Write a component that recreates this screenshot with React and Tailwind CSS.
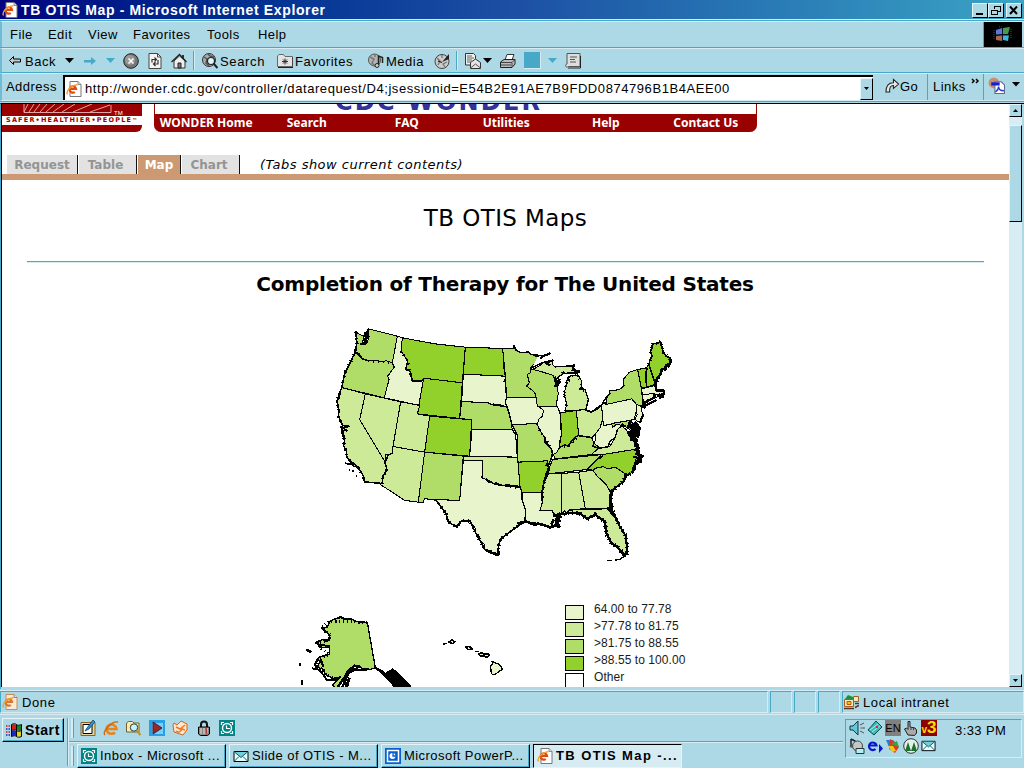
import React from "react";

const UI = "font-['Liberation_Sans',Arial,sans-serif]";
const VERDANA = "font-['DejaVu_Sans',Verdana,sans-serif]";

function Icon({ children, size = 16, className = "" }) {
  return (
    <svg viewBox="0 0 16 16" width={size} height={size} className={"shrink-0 " + className} shapeRendering="geometricPrecision">
      {children}
    </svg>
  );
}

function IePage({ dim }) {
  return (
    <Icon>
      <path d="M4 .5h8l3 3v12H4z" fill={dim ? "#fbe9d8" : "#fff"} stroke={dim ? "#c98a5a" : "#777"} />
      <path d="M12 .5v3h3" fill="#ddd" stroke="#777" strokeWidth=".8" />
      <path d="M3.500 8h6.500a3.200 3.200 0 1 0-1.200 3" fill="none" stroke={dim ? "#d87828" : "#e04810"} strokeWidth="2.200" />
      <path d="M1.500 13.500C-.5 10 5 4.500 11.500 3.500" fill="none" stroke="#f0a030" strokeWidth="1.400" />
    </Icon>
  );
}

function Caret({ color = "#000" }) {
  return (
    <svg viewBox="0 0 9 5" width="9" height="5" className="shrink-0">
      <path d="M0 0h9L4.500 5z" fill={color} />
    </svg>
  );
}

function OutlookClock() {
  return (
    <Icon>
      <path d="M0 0h16v16H0z" fill="#008484" />
      <circle cx="8" cy="8" r="4.500" fill="#008484" stroke="#fff" strokeWidth="1.400" />
      <path d="M7.500 5.500v3H11M2.500 5V2.500H5M11 2.500h2.500V5M2.500 11v2.500H5M11 13.500h2.500V11" fill="none" stroke="#fff" strokeWidth="1.200" />
    </Icon>
  );
}

function Envelope({ size = 16 }) {
  return (
    <Icon size={size}>
      <path d="M1 3.500h14v10H1z" fill="#e4ffff" stroke="#000" />
      <path d="M1.500 4l6.500 5.500L14.500 4M1.500 13L6 8.500M14.500 13L10 8.500" fill="#70d0d8" stroke="#185868" />
    </Icon>
  );
}

function Divider() {
  return <div className="h-[19px] w-[2px] shrink-0 border-l border-[#48a8c8] bg-[#d6ebf2]" />;
}

function TitleBar() {
  const btn = "flex h-[15px] w-[16px] items-center justify-center border border-t-[#e6f4f8] border-l-[#e6f4f8] border-r-black border-b-black bg-[#add8e6]";
  return (
    <header className="flex h-[19px] shrink-0 items-center bg-linear-to-r from-[#000080] via-[#1d4fa4] to-[#3ca4c4] pl-[2px] pr-[2px]">
      <IePage />
      <h1 className="ml-[3px] mt-[2px] whitespace-nowrap text-[14px] font-bold leading-[17px] tracking-[0.64px] text-white">
        TB OTIS Map - Microsoft Internet Explorer
      </h1>
      <div className="ml-auto mt-px flex">
        <div className={btn}>
          <svg width="12" height="11"><path d="M2 9h7" stroke="#000" strokeWidth="2" /></svg>
        </div>
        <div className={btn}>
          <svg width="12" height="11" shapeRendering="crispEdges"><path d="M4.500 4V1.500h6v5H8M4 1.500h7M1.500 5.500h6v4h-6zM1 5h7" fill="none" stroke="#000" /></svg>
        </div>
        <div className={btn + " ml-[2px]"}>
          <svg width="12" height="11"><path d="M2 1.500l7 7.500M9 1.500L2 9" stroke="#000" strokeWidth="2" /></svg>
        </div>
      </div>
    </header>
  );
}

function MenuBar() {
  return (
    <nav className="flex h-[26px] shrink-0 items-stretch border-t border-[#d6ebf2] border-l-2 border-l-[#70bcd4]">
      <div className="flex items-center text-[13px] leading-[15px] tracking-[0.45px]">
        <span className="ml-[8px] w-[38px]">File</span>
        <span className="w-[40px]">Edit</span>
        <span className="w-[45px]">View</span>
        <span className="w-[74px]">Favorites</span>
        <span className="w-[51px]">Tools</span>
        <span className="w-[40px]">Help</span>
      </div>
      <div className="ml-auto mr-[2px] flex w-[39px] items-center justify-center border-l border-[#48a8c8] bg-black">
        <svg width="20" height="17" viewBox="0 0 20 17">
          <path d="M3 4l6-2v6l-6 1z" fill="#5878d8" />
          <path d="M10 2l7-1-2 7h-5z" fill="#489850" />
          <path d="M3 10l6-1v6l-6-1z" fill="#a86848" />
          <path d="M10 9h6l-1 6-5-1z" fill="#38b8d8" />
          <path d="M1 4v10M6 1L9 0M18 3v9" stroke="#446" strokeDasharray="1 1" />
          <path d="M3 9h13M9.500 2v13" stroke="#101030" />
        </svg>
      </div>
    </nav>
  );
}

function ToolBar() {
  return (
    <div className="flex h-[25px] shrink-0 items-center border-t border-b border-t-[#d6ebf2] border-b-[#48a8c8] border-l-2 border-l-[#70bcd4] text-[13px] leading-[15px] tracking-[0.5px]">
      <svg width="14" height="12" viewBox="0 0 13 12" className="ml-[6px] shrink-0">
        <path d="M1 5.500L5 1.500v2.500h7v3H5v2.500z" fill="#c8c8c8" stroke="#000" strokeWidth="1" />
      </svg>
      <span className="ml-[2px] mt-px w-[39px] pl-px">Back</span>
      <div className="ml-[2px]"><Caret /></div>
      <svg width="13" height="12" viewBox="0 0 13 12" className="ml-[10px] shrink-0">
        <path d="M0 5h7V2l5 4-5 4V7.500H0z" fill="#48a8c8" />
      </svg>
      <div className="ml-[9px]"><Caret color="#48a8c8" /></div>
      <Icon className="ml-[8px]">
        <circle cx="8" cy="8" r="7.300" fill="#777" stroke="#222" />
        <circle cx="7" cy="7" r="5" fill="#999" />
        <path d="M5.500 5.500l5 5M10.500 5.500l-5 5" stroke="#fff" strokeWidth="1.500" />
      </Icon>
      <Icon className="ml-[8px]">
        <path d="M2 .5h8.500L14 4v11.500H2z" fill="#f4f4f4" stroke="#444" />
        <path d="M10.500.5V4H14" fill="none" stroke="#444" />
        <path d="M5 9.500V6.500h4M7.500 4.500l2 2-2 2M11 7v4H7M8.500 9L6.500 11l2 2" fill="none" stroke="#333" strokeWidth="1.200" />
      </Icon>
      <Icon className="ml-[8px]">
        <path d="M12 2v4" stroke="#333" strokeWidth="2" />
        <path d="M3 8v7h11V8L8.500 3z" fill="#eee" stroke="#333" />
        <path d="M.5 9L8.500 1.500 15.500 9" fill="none" stroke="#222" strokeWidth="1.300" />
        <path d="M7 15v-5h3v5z" fill="#777" stroke="#222" />
      </Icon>
      <div className="ml-[6px]"><Divider /></div>
      <Icon className="ml-[7px]">
        <circle cx="7" cy="7" r="6.500" fill="#aaa" stroke="#333" />
        <path d="M2 4l3 2-1 4 3 3M6 1l2 2 4 1" stroke="#555" fill="none" strokeWidth="1.500" />
        <circle cx="9" cy="8" r="3.500" fill="#ddf4f8" stroke="#222" strokeWidth="1.200" />
        <path d="M11.500 10.500l4 4.500" stroke="#222" strokeWidth="2.200" />
      </Icon>
      <span className="ml-[2px] mt-px w-[57px] tracking-[0.65px]">Search</span>
      <Icon>
        <path d="M.5 13.500V3L2 1.500h4.500L8 3.500h7.500v10z" fill="#e4e4e4" stroke="#666" />
        <path d="M1 14.500h15V4" fill="none" stroke="#222" />
        <path d="M8 5.500v6M5 8.500h6M6 6.500l4 4M10 6.500l-4 4" stroke="#333" />
      </Icon>
      <span className="ml-[2px] mt-px w-[73px]">Favorites</span>
      <Icon>
        <circle cx="6.500" cy="7" r="6" fill="#b4b4b4" stroke="#555" />
        <path d="M2 4l4 2-2 4 3 3M7 1v3" stroke="#777" fill="none" strokeWidth="1.500" />
        <path d="M10.500 12V3l4 1.500V10" fill="none" stroke="#222" strokeWidth="1.500" />
        <circle cx="9" cy="12.500" r="2" fill="#ccc" stroke="#222" />
      </Icon>
      <span className="ml-[2px] mt-px w-[48px]">Media</span>
      <Icon>
        <circle cx="8" cy="8.500" r="7" fill="#ccc" stroke="#444" />
        <path d="M3 5l3 3-2 4M8 2v3M13 9l-4 2 2 3" stroke="#777" fill="none" strokeWidth="1.300" />
        <path d="M8 9l7-8v5z" fill="#222" />
        <path d="M4 8l4 1.500" stroke="#222" strokeWidth="1.300" />
      </Icon>
      <div className="ml-[6px]"><Divider /></div>
      <Icon className="ml-[7px]">
        <path d="M.5.500h8l2 2V12H.5z" fill="#eee" stroke="#333" />
        <path d="M2 3h5M2 5h7M2 7h5M2 9h4" stroke="#666" />
        <path d="M5.500 9.500L10.500 6l5 3.500v6h-10z" fill="#e4e4e4" stroke="#333" />
        <path d="M5.500 15l5-4 5 4" fill="none" stroke="#555" />
      </Icon>
      <div className="ml-[2px]"><Caret /></div>
      <Icon className="ml-[8px]">
        <path d="M5 7L7 1.500h7L12 7z" fill="#fff" stroke="#333" />
        <path d="M.5 9L4 6.500h11V11l-3 3.500H.5z" fill="#bbb" stroke="#222" />
        <path d="M1 9.500h11l3-3M12 10v4M1 12h10" fill="none" stroke="#444" />
      </Icon>
      <div className="ml-[8px] h-[17px] w-[17px] shrink-0 border-b border-r border-[#d6ebf2] bg-[#48a8c8]" />
      <div className="ml-[7px]"><Caret color="#48a8c8" /></div>
      <Icon className="ml-[8px]">
        <path d="M2 .5h13v13H3.500c-3 2-4-2-1.500-2.500z" fill="#ddd" stroke="#555" />
        <path d="M3 15h12.500V3" fill="none" stroke="#222" />
        <path d="M5 4h7M5 6.500h5M5 9h6" stroke="#555" />
      </Icon>
    </div>
  );
}

function AddressBar() {
  return (
    <div className="flex h-[28px] shrink-0 items-stretch border-t border-b border-t-[#d6ebf2] border-b-[#d6ebf2] border-l-2 border-l-[#70bcd4] text-[13px] leading-[26px]">
      <span className="w-[61px] pl-[4px] tracking-[0.45px]">Address</span>
      <div className="mt-px flex h-[25px] w-[810px] items-center border-t-2 border-l-2 border-t-black border-l-black bg-white">
        <div className="pl-px"><IePage /></div>
        <span className="ml-[3px] whitespace-nowrap leading-[22px] tracking-[0.57px]">
          http://wonder.cdc.gov/controller/datarequest/D4;jsessionid=E54B2E91AE7B9FDD0874796B1B4AEE00
        </span>
        <div className="ml-auto flex h-[22px] w-[13px] items-center justify-center border border-t-[#e6f4f8] border-l-[#e6f4f8] border-r-black border-b-black bg-[#add8e6]">
          <svg width="5" height="3"><path d="M0 0h5L2.500 3z" /></svg>
        </div>
      </div>
      <Icon className="ml-[12px] mt-[4px]" size={15}>
        <path d="M1 15C1 8 4 5 9 5V1.500l5.500 5L9 11V8C6 8 4.500 10 5 15z" fill="#e8e8e8" stroke="#222" strokeWidth="1.100" />
      </Icon>
      <span className="w-[27px] tracking-[0.3px]">Go</span>
      <div className="border-l border-[#48a8c8]" />
      <span className="ml-[5px] w-[38px] tracking-[0.45px]">Links</span>
      <svg width="9" height="7" className="mt-[4px] shrink-0"><path d="M1 1l2 2-2 2M5 1l2 2-2 2" fill="none" stroke="#000" strokeWidth="1.500" /></svg>
      <div className="ml-[3px] border-l border-[#48a8c8]" />
      <Icon className="ml-[4px] mt-[3px]" size={17}>
        <circle cx="5.500" cy="5.500" r="5" fill="#c49070" />
        <path d="M6.500 4.500h6l3 3v8h-9z" fill="#fff" stroke="#668" />
        <path d="M3 5h8v3H3z" fill="#1020d0" />
        <path d="M7 14c3-2 3-4 3-5 0 3 2 4 5 4" fill="none" stroke="#2838d8" strokeWidth="1.300" />
      </Icon>
      <div className="ml-[7px] mt-[8px]"><svg width="8" height="5"><path d="M0 0h8L4 4.500z" /></svg></div>
    </div>
  );
}

const C1 = "#e8f4cc", C2 = "#cdea99", C3 = "#b0dc68", C4 = "#92d02c";

/* West half, three units per pixel. */
const WEST = [
  [C3, "M92 36L100 42 108 47 118 48 112 70 122 74 130 60 130 28 217 50 202 130 185 124 165 126 150 122 130 124 112 118 104 104 92 98 96 70Z"],
  [C3, "M92 98L104 104 112 118 130 124 150 122 165 126 185 124 202 130 208 143 188 170 192 180 178 235 50 204 60 160 78 125Z"],
  [C1, "M217 50L232 55 228 95 248 125 242 150 255 155 262 185 284 186 296 178 284 258 178 235 192 180 188 170 208 143 202 130Z"],
  [C4, "M232 55L330 73 421 83 412 190 296 176 292 184 262 185 255 155 242 150 248 125 228 95Z"],
  [C4, "M296 176L412 190 404 297 277 283Z"],
  [C2, "M50 204L121 223 104 300 182 430 186 450 174 470 172 492 118 487 116 470 108 455 100 445 82 438 66 415 64 395 56 380 58 360 50 342 48 325 54 318 40 290 42 275 36 245 42 235Z"],
  [C2, "M121 223L227 247 201 403 183 405 182 430 104 300Z"],
  [C2, "M227 247L284 258 277 283 314 290 299 398 204 381Z"],
  [C2, "M204 381L299 398 280 548 240 543 166 495 172 492 174 470 186 450 180 430 183 405 201 403Z"],
  [C4, "M314 290L440 301 434 410 299 398Z"],
  [C3, "M299 398L415 410 404 543 331 540 298 538 295 550 280 548Z"],
  [C4, "M421 83L534 87 541 170 415 164Z"],
  [C1, "M415 164L541 170 541 180 544 235 541 245 545 262 520 254 500 255 490 250 410 246Z"],
  [C3, "M410 246L490 250 500 255 520 254 545 262 555 290 562 330 441 329 440 301 404 297Z"],
  [C1, "M441 329L562 330 568 340 572 345 577 413 434 410Z"],
  [C2, "M415 410L577 413 583 455 585 505 575 498 560 500 550 495 530 498 520 492 510 494 500 488 490 488 484 480 471 475 473 424 415 422Z"],
  [C1, "M415 422L473 424 471 475 484 480 490 488 500 488 510 494 520 492 530 498 550 495 560 500 575 498 592 508 593 540 603 570 598 608 582 612 575 622 556 636 540 648 526 660 520 685 524 706 515 708 490 698 480 690 478 675 466 664 462 650 452 640 450 625 435 605 410 603 402 618 395 622 370 608 362 580 331 540 404 543Z"],
];

/* East half, shifted 175 pixels to the right. */
const EAST = [
  [C3, "M8 87L42 88 42 78 48 92 60 99 85 98 92 104 108 110 128 110 112 124 90 148 92 160 82 165 88 190 80 200 100 215 107 225 108 235 20 235 16 170Z"],
  [C1, "M20 235L108 235 112 250 118 262 130 272 128 290 115 300 113 316 108 312 36 316 30 290 20 262 16 250Z"],
  [C3, "M36 316L108 312 113 316 118 330 135 355 135 370 142 370 155 390 158 405 148 430 138 437 144 424 54 428 52 345Z"],
  [C4, "M54 428L144 424 138 437 148 440 142 455 140 465 132 485 124 520 66 520 60 500Z"],
  [C1, "M66 520L124 520 128 545 120 573 158 572 162 590 170 590 178 600 168 606 176 622 150 620 138 622 120 612 100 610 78 608 76 570 66 540Z"],
  [C3, "M90 148L110 150 120 155 160 168 168 185 166 198 180 186 172 205 175 222 168 260 112 260 107 225 100 215 80 200 88 190 82 165 92 160Z"],
  [C2, "M98 150L120 138 132 128 150 125 160 122 156 134 165 142 185 142 205 140 215 138 225 150 235 155 220 162 205 160 190 162 172 175 165 185 160 168 120 155Z"],
  [C2, "M200 190L202 178 208 170 222 168 235 168 245 185 245 200 238 210 255 210 265 240 258 270 196 275 200 250 192 225Z"],
  [C1, "M115 260L172 260 180 280 184 345 178 370 178 385 170 400 158 405 155 390 142 370 135 370 135 355 118 330 113 316 115 300 128 290 130 272Z"],
  [C4, "M182 280L229 273 236 348 224 354 220 368 212 368 205 380 195 376 178 384 184 345Z"],
  [C2, "M229 273L258 270 275 277 288 272 305 257 308 300 300 325 285 345 275 355 262 350 250 352 236 348Z"],
  [C3, "M178 384L195 376 205 380 212 368 220 368 224 354 236 348 250 352 262 350 275 355 283 372 298 383 275 405 165 418 160 405 170 400Z"],
  [C3, "M158 420L310 405 302 416 290 420 262 450 145 463 150 440Z"],
  [C2, "M145 463L184 462 186 580 160 586 158 572 120 573 128 545 124 520 135 485Z"],
  [C2, "M184 462L236 458 246 500 258 535 256 567 205 572 208 578 200 584 194 574 186 582Z"],
  [C2, "M236 458L278 452 292 470 318 495 330 515 332 540 328 562 320 568 256 567Z"],
  [C2, "M205 572L320 568 330 562 345 590 352 610 378 650 382 700 375 708 362 700 350 680 335 672 318 640 315 605 298 595 285 585 272 590 262 598 250 590 240 582 205 580Z"],
  [C3, "M278 452L292 444 310 442 325 448 345 443 375 462 372 485 350 502 330 515 318 495 292 470Z"],
  [C4, "M310 405L402 390 415 400 428 412 415 432 400 440 395 460 385 465 375 462 345 443 325 448 310 442 292 444 278 452 262 450 290 420 302 416Z"],
  [C2, "M275 405L298 383 314 384 330 380 345 355 352 330 365 320 378 330 388 345 400 355 415 388 402 390 310 405Z"],
  [C1, "M308 300L312 318 335 312 338 324 350 314 365 318 352 330 345 355 330 365 324 382 300 386 283 372 288 355 285 345 300 325Z"],
  [C1, "M305 257L316 248 318 255 395 238 410 255 408 280 402 300 312 318 308 300Z"],
  [C3, "M335 312L390 303 405 318 415 330 400 345 385 325 365 318 350 314 338 324Z"],
  [C1, "M410 255L425 262 424 275 430 285 420 310 405 300 412 285 408 275Z"],
  [C3, "M320 235L330 222 328 212 348 212 362 208 372 198 370 180 388 158 413 150 422 190 428 240 430 262 410 255 395 238 318 255Z"],
  [C4, "M413 150L440 145 440 160 436 170 440 203 424 206Z"],
  [C4, "M440 145L446 135 452 150 466 195 440 203 436 170Z"],
  [C4, "M446 135L455 110 452 95 458 72 472 72 482 66 490 100 500 110 515 122 505 140 490 148 480 165 466 195 452 150Z"],
  [C1, "M424 208L466 198 472 212 490 218 488 230 474 228 460 222 428 226Z"],
  [C1, "M428 226L460 222 462 234 445 240 430 250Z"],
];

const PACIFIC = "M92 36L96 70 90 98 78 125 60 160 50 204 36 245 42 275 40 290 52 318 50 332 56 345 58 365 56 380 64 395 66 415 100 445 116 470 118 487";
const TEXAS_COAST = "M331 540L362 580 370 608 395 622 410 603 435 605 452 640 480 690 520 706 520 685 526 660 556 636 575 622 598 608";
const GULF = "M382 700L375 708 350 680 335 672 318 640 315 605 298 595 285 585 262 598 240 582 205 580 188 584 160 588";
const ATLANTIC = "M392 462L375 470 372 485 350 502 334 515 332 540 332 562 345 590 360 622 378 650 382 700";
const MAINE = "M446 135L455 110 452 95 458 72 472 72 482 66 490 100 515 122 500 142 486 150 480 165 466 195";

function UsMap() {
  return (
    <svg width="400" height="272" viewBox="290 315 400 272" className="shrink-0" shapeRendering="crispEdges">
      <g stroke="#000" strokeWidth="3.200" strokeLinejoin="round">
        <g transform="translate(325 319.500) scale(.3333)">
          {WEST.map(([fill, d]) => <path key={d} d={d} fill={fill} />)}
          <g fill="none" strokeWidth="5">
            <path d="M130 28L128 40 120 44 130 52 118 60 126 68 110 74 122 74M122 36L124 56M116 66L120 76" strokeWidth="8" />
            <path d={PACIFIC} strokeWidth="4.500" />
            <path d={PACIFIC} strokeWidth="10" strokeDasharray="3 17 4 11" />
            <path d="M52 318L72 320 54 326 66 334 50 332" />
            <path d="M60 431l18 4 12 0M72 452h4M82 455h6M98 450h6M92 470h4" />
            <path d="M118 487L172 492 174 470 186 450 180 430 190 405M92 98L112 118 130 124M248 125L242 150 255 155 262 185 292 184" strokeWidth="4.500" />
            <path d="M172 492L174 470 186 450M130 124L202 130M228 95L248 125 255 155 262 185 292 184M471 475L500 488 530 498 585 505M490 250L545 262" strokeWidth="8" strokeDasharray="3 10 4 13" />
            <path d={TEXAS_COAST} strokeWidth="5" />
            <path d={TEXAS_COAST} strokeWidth="10" strokeDasharray="4 12 3 8" />
            <path d="M534 87L539 168M541 180l-6 8M500 255L545 262M484 480L510 494 530 498 560 500 585 505" strokeWidth="4.500" />
          </g>
        </g>
        <g transform="translate(500 319.500) scale(.3333)">
          {EAST.map(([fill, d]) => <path key={d} d={d} fill={fill} />)}
          <path d="M112 112L150 102 152 108 130 122 118 134 96 147 100 138Z" fill="#fff" stroke="none" />
          <g fill="none" strokeWidth="5">
            <path d="M42 76L48 92 60 99 85 98 92 104 130 110M128 110L152 102M90 148L118 134 132 128 160 122M165 142L205 140 215 138 222 152 238 155 205 162 190 162 176 172M172 175l8 6-8 10M164 180l4 16 14-12" strokeWidth="4.500" />
            <path d="M120 116l14-8 16-6M150 138l-12-8 22-8M205 140l20-2M215 150l22 6-14 8M186 162l8-4M164 172l8 16-6 12 16-14" strokeWidth="7" />
            <path d="M205 174l4 14M198 188l6 4M238 210l10-6 4 12M265 240l-8 32 16 6 32-22 13-22 12-12" strokeWidth="4.500" />
            <path d="M196 275L200 250 192 225 200 190 208 170 235 168 245 200" strokeWidth="8" strokeDasharray="3 13 4 9" />
            <path d={MAINE} strokeWidth="4.500" />
            <path d={MAINE} strokeWidth="10" strokeDasharray="4 8 3 10" />
            <path d="M515 122L505 140 498 136 496 150 486 148 482 164 472 176 466 195" strokeWidth="8" />
            <path d="M466 198l4 16 20-2 2 12-20 4M460 222l8 14M476 222l4 12 12-4M462 234L444 244 430 254 424 264M430 262l30-16 10-4M424 258l12 8M430 284l-10 26" strokeWidth="7" />
            <path d="M392 304l-8 20 16-8 4 16-14 6 20 10-16 12 14 4 0 18M404 306l14 20-4 24-10-24 16 4M384 336l12 22 18 4M394 320l12 42M410 370l6 20M365 314l10 8" strokeWidth="9" />
            <path d="M404 388l14 6-10 10 22 6-20 6 14 10-18 4-2 18-8 14M415 392l8 28M400 412h12M404 422l16 6" strokeWidth="7" />
            <path d={ATLANTIC} strokeWidth="6" />
            <path d={ATLANTIC} strokeWidth="12" strokeDasharray="3 11 4 8" />
            <path d="M338 512l-8 24 6 30-10 4 20 22M328 560l12 4" strokeWidth="8" />
            <path d={GULF} strokeWidth="7" />
            <path d={GULF} strokeWidth="13" strokeDasharray="4 10 3 9" />
            <path d="M372 712l-14 8-14 2M336 724h-14" strokeWidth="4" />
            <path d="M160 586l22 6-14 6 12 6-10 4 8 14-12-4-16 6-14-6-22-6-10 4-26-10M162 600l-8 16M172 592l-4 28" strokeWidth="8" />
            <path d="M80 606l-8 2-20 2" strokeWidth="6" />
            <path d="M158 405l-10 26-10 6 8 6-14 42-8 60M135 355v15l20 20 4 20M178 384l17-8 10 4 7-12 12-14 12-6 39 7M16 250l8 20 12 46 16 30M283 372l-6 8 21 6 26-4 6-17 15-10 8-26" strokeWidth="4.500" />
            <path d="M158 405l-10 26-14 54-8 60M118 330l17 25 20 35M178 384l27-4 31-32" strokeWidth="8" strokeDasharray="3 10 4 12" />
            <path d="M302 408l-12 14-28 26M441 146l-4 20 3 34M448 140l18 54" />
          </g>
        </g>
      </g>
    </svg>
  );
}

const ALASKA = "M95 98L112 96 120 78 150 66 160 72 185 72 200 80 232 82 256 218 240 224 215 220 205 212 190 214 172 228 155 262 140 285 128 270 142 256 150 246 130 250 108 240 98 222 80 216 90 202 84 190 100 182 118 178 118 158 88 156 80 144 96 134 118 136 120 120Z";

function AlaskaHawaii() {
  return (
    <svg width="275" height="100" viewBox="290 595 275 100" className="shrink-0" shapeRendering="crispEdges">
      <g transform="translate(290 595) scale(.3333)" stroke="#000" strokeWidth="4" strokeLinejoin="round">
        <path d={ALASKA} fill={C3} />
        <path d="M232 82L120 78 95 98 120 120 118 136 80 144 88 156 118 178 84 190 80 216 98 222 108 240 130 250" fill="none" strokeWidth="9" strokeDasharray="4 9 3 7" />
        <path d="M142 72l10-6 12 6 20 0M95 98l12 14M78 142l10-4M82 148l38 6M104 140l14-8M84 190l-10 20 12 8M92 192l8 24M66 220l20 4 16 18 8 12 28 0 14-10" fill="none" strokeWidth="6" />
        <path d="M48 164l16 8M26 208h8M32 258h6M34 266h4" fill="none" strokeWidth="8" />
        <path d="M140 280l34-48 22-22M156 278l20-44 20-10 14-12M180 220l28 6 30-4M166 262l6 20" fill="none" strokeWidth="7" />
        <path d="M256 218l16 6 14 12 22-14 18 14 24 24 12 14v12h-44l-12-20-26-26Z" fill="#000" />
        <path d="M170 276l8-28" strokeWidth="9" />
        <path d="M460 148l10-4M476 142l10-8 8 6-6 6zM528 156l10-2 8 8-12 2zM556 170l12 0M566 178l10-6 8 10-10 2zM580 178l18 0-6 10-8-4z" fill={C1} strokeWidth="5" />
        <path d="M606 198l10 6 12 4 10 14-14 10-12 8-8-4-2-22 6-8z" fill={C1} strokeWidth="4" />
      </g>
    </svg>
  );
}

const LEGEND = [
  [C1, "64.00 to 77.78"],
  [C2, ">77.78 to 81.75"],
  [C3, ">81.75 to 88.55"],
  [C4, ">88.55 to 100.00"],
  ["#fff", "Other"],
];

function Banner() {
  const item = "text-center";
  return (
    <div className="flex h-[28px] shrink-0 overflow-hidden">
      <div className="flex w-[140px] flex-col overflow-hidden rounded-br-[6px] bg-[#990000]">
        <svg width="140" height="12" viewBox="0 0 140 12">
          <path d="M22 0v8.500H109V1M22 8L26 0M27 8L32 0M32 8L38 0M38 8L45 0M44 8L53 0M51 8L62 0M60 8L73 0M71 8L90 0M88 8L108 1" fill="none" stroke="#e8b8b8" strokeWidth=".9" />
          <text x="112" y="11" fontSize="6" fill="#fff" fontFamily="Liberation Sans">TM</text>
        </svg>
        <div className="h-[9px] whitespace-nowrap bg-white pl-[4px] font-['DejaVu_Sans',sans-serif] text-[6.500px] font-bold leading-[8px] tracking-[1.200px] text-[#990000]">
          SAFER<span>•</span>HEALTHIER<span>•</span>PEOPLE<span className="text-[5px] tracking-normal">™</span>
        </div>
      </div>
      <div className="ml-[12px] flex w-[603px] flex-col overflow-hidden rounded-b-[7px] border-x border-[#990000] bg-[#990000]">
        <div className={"flex h-[10px] items-end overflow-hidden bg-white pl-[180px] text-[24px] font-bold leading-[18px] text-[#333399] " + VERDANA}>
          <span className="mb-[3px] whitespace-nowrap tracking-[2.200px]">CDC WONDER</span>
        </div>
        <div className="flex h-[18px] items-center whitespace-nowrap pl-px font-['Noto_Sans','Open_Sans',sans-serif] text-[12px] font-bold leading-[18px] text-white">
          <span className={item + " w-[101px]"}>WONDER Home</span>
          <span className={item + " w-[101px]"}>Search</span>
          <span className={item + " w-[100px]"}>FAQ</span>
          <span className={item + " w-[100px]"}>Utilities</span>
          <span className={item + " w-[100px]"}>Help</span>
          <span className={item + " w-[101px]"}>Contact Us</span>
        </div>
      </div>
    </div>
  );
}

function Tabs() {
  const tab = "flex h-[19px] items-center justify-center border-r border-[#111] bg-[#e2e2e2] pt-px text-[#949494]";
  return (
    <div className={"mt-[23px] flex h-[25px] shrink-0 border-b-[6px] border-[#cc9973] pl-[5px] text-[12px] font-bold " + VERDANA}>
      <div className={tab + " w-[71px]"}>Request</div>
      <div className={tab + " ml-px w-[58px] pr-[4px]"}>Table</div>
      <div className="ml-px flex h-[19px] w-[43px] items-center justify-center border-r border-[#111] bg-[#cc9973] pt-px text-white">Map</div>
      <div className={tab + " ml-px w-[58px] pr-[3px]"}>Chart</div>
      <div className="ml-[20px] whitespace-nowrap text-[13px] font-normal italic leading-[19px] tracking-[0.48px] text-black">(Tabs show current contents)</div>
    </div>
  );
}

function ScrollButton({ up }) {
  return (
    <div className="flex h-[13px] w-full shrink-0 items-center justify-center border border-t-[#e6f4f8] border-l-[#e6f4f8] border-r-black border-b-black bg-[#add8e6]">
      <svg width="5" height="3">{up ? <path d="M0 3h5L2.500 0z" /> : <path d="M0 0h5L2.500 3z" />}</svg>
    </div>
  );
}

function Page() {
  return (
    <div className="flex h-[586px] shrink-0 border-t border-black border-l border-l-[#48a8c8]">
      <main className="flex h-[583px] w-[1008px] flex-col overflow-hidden border-l border-black bg-white">
        <Banner />
        <Tabs />
        <h2 className={"mt-[24px] text-center text-[23px] font-normal leading-[28px] tracking-[0.400px] " + VERDANA}>TB OTIS Maps</h2>
        <div className="ml-[25px] mt-[29px] h-[2px] w-[957px] shrink-0 border-t border-[#48a8c8] bg-[#d6ebf2]" />
        <h3 className={"mt-[8px] pr-px text-center text-[20px] font-bold leading-[26px] tracking-[-0.190px] " + VERDANA}>Completion of Therapy for The United States</h3>
        <div className="ml-[288px] mt-[18px] flex flex-col">
          <UsMap />
          <div className="mt-[8px] flex">
            <AlaskaHawaii />
            <ul className="mt-[6px] flex flex-col text-[12px] leading-[17px] text-[#1a1a1a]">
              {LEGEND.map(([color, label]) => (
                <li key={label} className="flex h-[17px]">
                  <svg width="19" height="19" className="shrink-0 overflow-visible" shapeRendering="crispEdges">
                    <rect x=".5" y="4.500" width="18" height="14" fill={color} stroke="#000" />
                  </svg>
                  <span className="ml-[10px] tracking-[0.060px]">{label}</span>
                </li>
              ))}
            </ul>
          </div>
        </div>
      </main>
      <div className="flex h-[583px] w-[13px] flex-col bg-[#d8ecf4]">
        <ScrollButton up />
        <div className="mt-[8px] h-[97px] border border-t-[#e6f4f8] border-l-[#e6f4f8] border-r-black border-b-black bg-[#add8e6]" />
        <div className="mt-auto"><ScrollButton /></div>
      </div>
      <div className="w-[2px] bg-[#add8e6]" />
    </div>
  );
}

function StatusBar() {
  const pane = "h-[22px] border border-t-[#48a8c8] border-l-[#48a8c8] border-r-[#d6ebf2] border-b-[#d6ebf2]";
  return (
    <footer className="flex h-[24px] shrink-0 gap-[2px] border-t border-[#d6ebf2] text-[13px] leading-[20px]">
      <div className={pane + " flex w-[768px] items-center pl-px"}>
        <IePage dim />
        <span className="ml-[4px] mt-px tracking-[0.6px]">Done</span>
      </div>
      <div className={pane + " w-[22px]"} />
      <div className={pane + " w-[22px]"} />
      <div className={pane + " w-[22px]"} />
      <div className={pane + " flex flex-1 items-center"}>
        <Icon>
          <path d="M2 5l3-4 5 2 1 3z" fill="#20903c" />
          <path d="M1.500 5.500h9v7h-9zM10.500 2.500h5v5h-5z" fill="#f8e8c0" stroke="#a06020" />
          <path d="M4 7.500h4v3H4z" fill="#f0c020" stroke="#c05010" />
          <path d="M1 14.500h10M12 9.500h4M12 13.500l4-2" stroke="#603018" strokeWidth="1.500" />
        </Icon>
        <span className="ml-[4px] mt-px tracking-[0.6px]">Local intranet</span>
      </div>
    </footer>
  );
}

function Task({ icon, children, active }) {
  return (
    <div className={"flex h-[24px] w-[149px] shrink-0 items-center overflow-hidden whitespace-nowrap border pl-[3px] text-[13px] leading-[18px] " + (active
      ? "border-t-black border-l-black border-r-[#e6f4f8] border-b-[#e6f4f8] bg-[#d6ebf2] font-bold tracking-[1.400px]"
      : "border-t-[#e6f4f8] border-l-[#e6f4f8] border-r-black border-b-black bg-[#add8e6] tracking-[0.45px] shadow-[inset_-1px_-1px_0_#48a8c8]")}>
      {icon}
      <span className="ml-[3px]">{children}</span>
    </div>
  );
}

function QuickLaunch() {
  return (
    <div className="flex items-center">
      <Icon className="ml-[6px]">
        <path d="M1 2.500h14v13H1z" fill="#e8d8a0" stroke="#886020" />
        <path d="M3 4.500h9v9H3z" fill="#fff" stroke="#000" />
        <path d="M5 11l2-3 6-8 2 2-6 7z" fill="#3090d0" stroke="#104868" strokeWidth=".8" />
      </Icon>
      <Icon className="ml-[7px]">
        <path d="M4 9h9.500a5 4.600 0 1 0-1.500 3.500" fill="none" stroke="#e88418" strokeWidth="2.500" />
        <path d="M2 15C-1 12 8 1 15 2" fill="none" stroke="#c46810" strokeWidth="1.300" />
      </Icon>
      <Icon className="ml-[7px]">
        <path d="M.5 3l2-1.500h4L8 3h5v9H.5z" fill="#f8ecb0" stroke="#706030" />
        <circle cx="8" cy="7.500" r="3.700" fill="#c0f4ff" stroke="#333" />
        <path d="M10.500 10.500l4 4.500" stroke="#c89018" strokeWidth="2" />
      </Icon>
      <Icon className="ml-[7px]">
        <path d="M0 0h16v16H0z" fill="#28a0e8" />
        <path d="M3 3h11v11H3z" fill="#78d0f8" />
        <path d="M4 2l9 6-9 6z" fill="#982828" stroke="#402038" />
      </Icon>
      <Icon className="ml-[7px]">
        <path d="M2 3l3 2 4-4 6 3v6l-4 5-9-3-1-7z" fill="#fce8d0" stroke="#d86018" />
        <path d="M4 7l4 2 5-4M4 11c2 2 5 1 6-2l3 1" fill="none" stroke="#f07820" strokeWidth="1.500" />
      </Icon>
      <Icon className="ml-[8px]">
        <path d="M5 8V4.500a3 3 0 0 1 6 0V8" fill="none" stroke="#111" strokeWidth="2" />
        <path d="M2.500 7h11v7l-2 1.500h-7L2.500 14z" fill="#888" stroke="#000" />
        <path d="M4 9h8M4 11h8M4 13h8" stroke="#e8e8d8" strokeDasharray="2 1" />
        <path d="M10 7.500l1 7" stroke="#b02020" />
      </Icon>
      <div className="ml-[7px]"><OutlookClock /></div>
    </div>
  );
}

function Tray() {
  return (
    <div className="ml-[2px] mt-[4px] flex h-[39px] w-[177px] border border-t-[#48a8c8] border-l-[#48a8c8] border-r-[#d6ebf2] border-b-[#d6ebf2]">
      <div className="grid grid-cols-[repeat(5,18px)] grid-rows-[18px_18px] pl-[3px]">
        <Icon>
          <path d="M1 6h3l5-5v14l-5-5H1z" fill="#60c8d8" stroke="#103840" />
          <path d="M11 5l4-2M11.500 8H16M11 11l4 2" stroke="#555" />
        </Icon>
        <Icon>
          <path d="M1 10l8-9 6 6-8 8z" fill="#40b8b8" stroke="#085050" />
          <path d="M3 10l8-6M5 12l8-6" stroke="#a0f0f0" /><circle cx="10" cy="7" r="1.200" fill="#e02020" />
        </Icon>
        <div className="flex h-[16px] w-[16px] items-center justify-center bg-[#808080] text-[11px] leading-[16px]">EN</div>
        <Icon>
          <path d="M5 15L1.500 9l2-1L5 9.500V1.500h2V7l5 1 1.500 2v3l-2 2.500z" fill="#aaa" stroke="#222" />
          <path d="M8 7v3M10.500 8v2" stroke="#444" />
        </Icon>
        <div className="flex h-[16px] w-[16px] items-end justify-center bg-[#900000] font-bold text-[#f4e000]">
          <span className="text-[10px] leading-[12px]">v</span><span className="text-[17px] leading-[16px]">3</span>
        </div>
        <Icon>
          <path d="M2 1v6M2 1l4 2v5" stroke="#222" strokeWidth="1.500" fill="none" />
          <circle cx="8.500" cy="8" r="5" fill="#c0c8c8" stroke="#444" />
          <path d="M7 10.500h8v5H7z" fill="#b0f0f4" stroke="#333" /><circle cx="2.500" cy="8" r="1.800" fill="#555" />
        </Icon>
        <Icon>
          <path d="M2 7.500h7.500a3.800 3.800 0 1 0-1 3.500" fill="none" stroke="#0818c8" strokeWidth="2.200" />
          <path d="M12 6v9l4-4.500z" fill="#0818c8" />
        </Icon>
        <Icon>
          <path d="M1 2l7 0 4 5-3 5-5-3z" fill="#2080d0" /><path d="M5 1l5 3 4 5-4 6-6-4z" fill="#e03820" />
          <path d="M6 6l6-3 2 6z" fill="#30a840" /><path d="M3 8l5 0 3 5-4 1z" fill="#f0c820" />
        </Icon>
        <Icon>
          <circle cx="8" cy="8" r="7.300" fill="#e4f0e8" stroke="#333" />
          <path d="M5 4l3 9H2zM11 4l3 9H8z" fill="#207030" />
        </Icon>
        <Envelope size={15} />
      </div>
      <span className="mt-[3px] ml-[16px] whitespace-nowrap text-[13px] leading-[16px] tracking-[0.400px]">3:33 PM</span>
    </div>
  );
}

function Taskbar() {
  return (
    <div className="flex min-h-0 flex-1 border-t border-[#d6ebf2]">
      <div className="ml-[2px] mt-[3px] flex h-[24px] w-[62px] items-center border border-t-[#e6f4f8] border-l-[#e6f4f8] border-r-black border-b-black pl-[3px] shadow-[inset_-1px_-1px_0_#48a8c8]">
        <Icon>
          <path d="M6 3c2-1 3-1 4 0v5c-1-1-2-1-4 0z" fill="#e01818" /><path d="M11 3c1 1 3 1 4 0v5c-1 1-3 1-4 0z" fill="#108818" />
          <path d="M6 9c2-1 3-1 4 0v5c-1-1-2-1-4 0z" fill="#1828c8" /><path d="M11 9c1 1 3 1 4 0v5c-1 1-3 1-4 0z" fill="#e8d010" />
          <path d="M5.500 2.500c2-1 4-1 5 0s3 1 5 0v12c-2 1-4 1-5 0s-3-1-5 0zM5.500 8.500c2-1 4-1 5 0s3 1 5 0M10.500 2.500v12" fill="none" stroke="#000" />
          <path d="M0 4h4M0 10h4" stroke="#e01818" strokeWidth="1.500" strokeDasharray="1.500 1" /><path d="M0 7h4M0 13h4" stroke="#1828c8" strokeWidth="1.500" strokeDasharray="1.500 1" />
        </Icon>
        <span className="ml-[3px] text-[14px] font-bold leading-[18px] tracking-[0.6px]">Start</span>
      </div>
      <div className="ml-[3px] mt-[3px] mb-[2px] w-[2px] border-l border-[#48a8c8] bg-[#d6ebf2]" />
      <div className="flex w-[774px] flex-col">
        <div className="flex h-[28px] items-center border-b border-[#48a8c8] pl-[2px]">
          <div className="h-[20px] w-[3px] border-r border-[#48a8c8] bg-[#d6ebf2]" />
          <QuickLaunch />
        </div>
        <div className="flex items-center gap-[3px] border-t border-[#d6ebf2] pl-[2px] pt-px">
          <div className="h-[20px] w-[3px] border-r border-[#48a8c8] bg-[#d6ebf2]" />
          <Task icon={<OutlookClock />}>Inbox - Microsoft ...</Task>
          <Task icon={<Envelope />}>Slide of OTIS - M...</Task>
          <Task icon={<Icon><path d="M0 0h16v16H0z" fill="#0860d0" /><path d="M2.500 2.500h11v11h-11z" fill="none" stroke="#fff" strokeWidth="1.500" /><circle cx="7.500" cy="8" r="3" fill="#fff" /><path d="M8 4v4h4" stroke="#0860d0" strokeWidth="1.300" fill="none" /></Icon>}>Microsoft PowerP...</Task>
          <Task active icon={<IePage />}>TB OTIS Map -...</Task>
        </div>
      </div>
      <Tray />
    </div>
  );
}

export default function App() {
  return (
    <div className={"flex h-[768px] w-[1024px] flex-col overflow-hidden bg-[#add8e6] text-black " + UI}>
      <TitleBar />
      <div className="h-[2px] shrink-0 border-b border-[#48a8c8] bg-[#d6ebf2]" />
      <MenuBar />
      <div className="h-px shrink-0 bg-[#48a8c8]" />
      <ToolBar />
      <AddressBar />
      <div className="h-[2px] shrink-0 border-b border-[#add8e6] bg-[#48a8c8]" />
      <Page />
      <div className="h-px shrink-0" />
      <StatusBar />
      <Taskbar />
    </div>
  );
}
